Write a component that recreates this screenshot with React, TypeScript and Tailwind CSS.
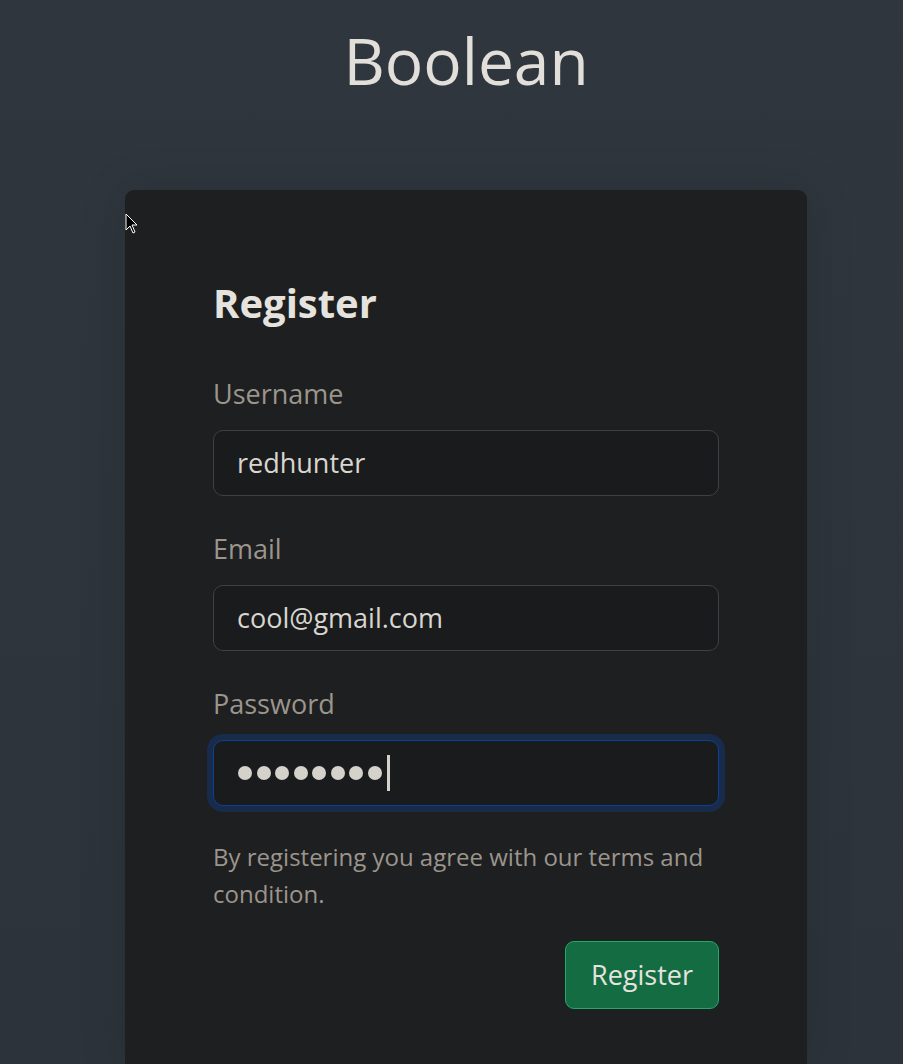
import { useState } from 'react';

const font = { fontFamily: '"Open Sans", "Noto Sans", sans-serif' };

function Field({ label, value, focused }: { label: string; value?: string; focused?: boolean }) {
  return (
    <div className="flex flex-col">
      <label className="text-[27px] leading-[42px] text-[#9b958c]">{label}</label>
      <div
        className={
          focused
            ? 'mt-[15px] flex h-[66px] items-center rounded-[10px] border border-[#0e3f92] bg-[#1a1b1d] px-[24px] shadow-[0_0_0_6px_#182b4a]'
            : 'mt-[15px] flex h-[66px] items-center rounded-[10px] border border-[#3f4043] bg-[#1a1b1d] px-[23px]'
        }
      >
        {focused ? (
          <div className="flex items-center gap-[4.5px]">
            {Array.from({ length: 8 }).map((_, i) => (
              <span key={i} className="h-[14px] w-[14px] rounded-full bg-[#d5d2cb]" />
            ))}
            <span className="ml-[1px] h-[36px] w-[3px] bg-[#d5d2cb]" />
          </div>
        ) : (
          <span className="text-[27px] text-[#d9d6cf]">{value}</span>
        )}
      </div>
    </div>
  );
}

export default function App() {
  const [username] = useState('redhunter');
  const [email] = useState('cool@gmail.com');

  return (
    <div className="relative min-h-[1064px] overflow-hidden bg-gradient-to-b from-[#2f363d] to-[#2c333a] pl-[29px]" style={font}>
      <h1 className="pt-[22px] text-center text-[64px] leading-[77px] text-[#e2dfda]">Boolean</h1>
      <div className="mx-auto mt-[91px] w-[682px] rounded-t-[9px] bg-[#1e1f21] px-[88px] pt-[89px] pb-[60px] shadow-[0_0_50px_rgba(0,0,0,0.12)]">
        <h2 className="text-[40px] leading-[48px] font-bold text-[#e6e3de]">Register</h2>
        <div className="mt-[46px] flex flex-col gap-[32px]">
          <Field label="Username" value={username} />
          <Field label="Email" value={email} />
          <Field label="Password" focused />
        </div>
        <p className="mt-[32px] text-[24px] leading-[37px] text-[#9b958c]">
          By registering you agree with our terms and condition.
        </p>
        <div className="mt-[29px] flex justify-end">
          <button className="h-[68px] w-[154px] rounded-[9px] border border-[#22a868] bg-[#146c43] text-[27px] text-[#e6e3de]">
            Register
          </button>
        </div>
      </div>
      <svg className="absolute left-[125px] top-[213px]" width="14" height="22" viewBox="0 0 14 22">
        <path d="M1 1 L1 17 L5 13 L8 20 L10 19 L7 12 L12 12 Z" fill="#000" stroke="#fff" strokeWidth="1" />
      </svg>
    </div>
  );
}
